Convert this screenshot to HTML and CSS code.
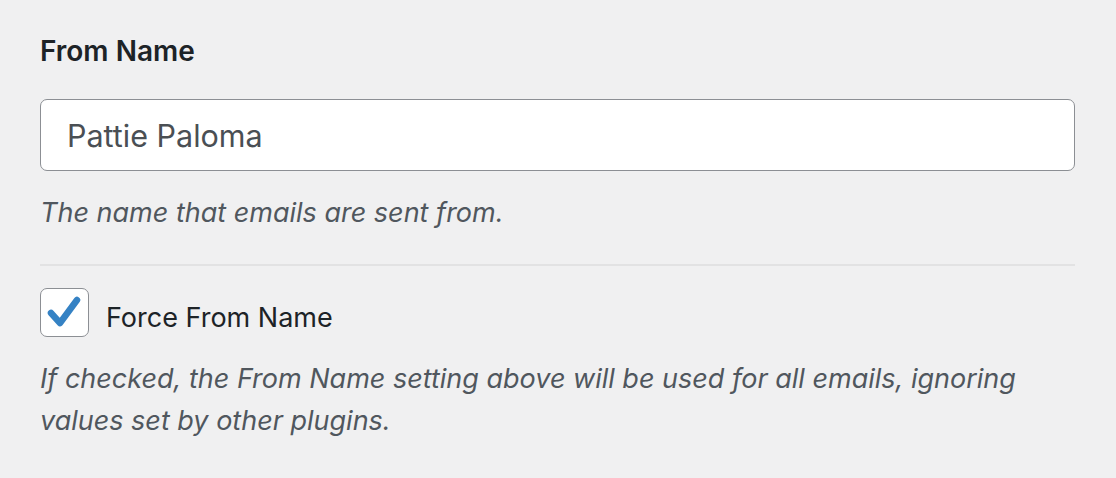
FILE: index.html
```html
<!DOCTYPE html>
<html>
<head>
    <title>Mail Settings</title>
    <link rel="stylesheet" href="styles.css">
</head>
<body>
    <div class="settings">
        <label class="field-label" for="fromName">From Name</label>
        <input class="text-input" id="fromName" type="text" value="Pattie Paloma">
        <p class="description first">The name that emails are sent from.</p>

        <div class="separator"></div>

        <div class="check-row">
            <span class="checkbox">
                <svg width="49" height="49" viewBox="0 0 49 49">
                    <polyline points="11,25 20,35 37,12" fill="none" stroke="#3582c4" stroke-width="6.5" stroke-linecap="round" stroke-linejoin="round"/>
                </svg>
            </span>
            <label class="check-label">Force From Name</label>
        </div>
        <p class="description">If checked, the From Name setting above will be used for all emails, ignoring values set by other plugins.</p>
    </div>
</body>
</html>
```

FILE: styles.css
```css
body {
    margin: 0;
    background-color: #f0f0f1;
    font-family: Inter, "Noto Sans", sans-serif;
    color: #1d2327;
}

.settings {
    padding: 33px 41px 0 40px;
}

.field-label {
    display: block;
    font-size: 28px;
    font-weight: 600;
    line-height: 36px;
}

.text-input {
    display: block;
    box-sizing: border-box;
    width: 100%;
    height: 72px;
    margin-top: 30px;
    padding: 0 26px;
    border: 1.5px solid #8c8f94;
    border-radius: 7px;
    background: #fff;
    font-family: Inter, "Noto Sans", sans-serif;
    font-size: 30.5px;
    color: #4a4f54;
    outline: none;
}

.description {
    margin: 20px 0 0 0;
    font-size: 27px;
    font-style: italic;
    line-height: 42px;
    color: #50575e;
}

.description.first {
    margin-top: 21px;
}

.separator {
    height: 2px;
    margin-top: 30px;
    background-color: #e2e2e3;
}

.check-row {
    display: flex;
    align-items: flex-start;
    margin-top: 22px;
}

.checkbox {
    box-sizing: border-box;
    width: 49px;
    height: 49px;
    border: 1.5px solid #8c8f94;
    border-radius: 7px;
    background: #fff;
    position: relative;
}

.checkbox svg {
    position: absolute;
    top: -1.5px;
    left: -1.5px;
}

.check-label {
    margin-left: 17px;
    padding-top: 9px;
    font-size: 27px;
    line-height: 41px;
}
```
